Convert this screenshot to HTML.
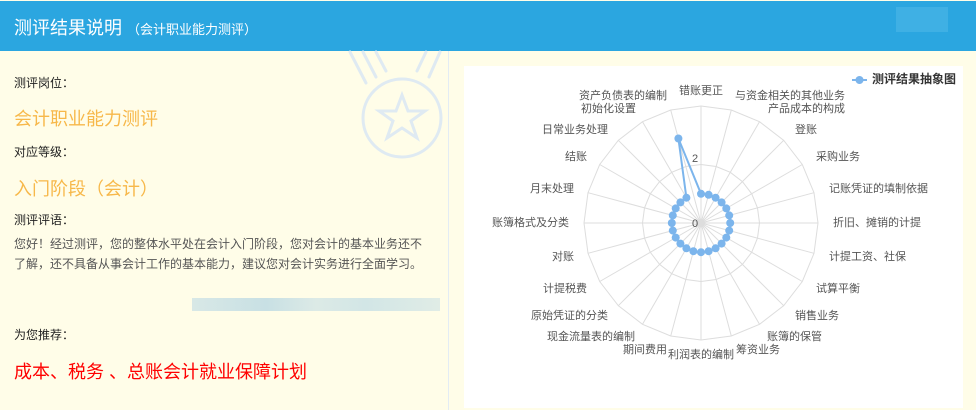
<!DOCTYPE html>
<html><head><meta charset="utf-8"><style>
body{margin:0;width:976px;height:410px;overflow:hidden;background:#fffde8;font-family:"Liberation Sans","Noto Sans CJK SC",sans-serif;position:relative}
.hd{position:absolute;left:0;top:1px;width:976px;height:50px;background:#2ba6e0;color:#fff}
.t{position:absolute;left:14px;top:13px;font-size:18px}
.t small{font-size:13px}
.a{position:absolute;left:14px;font-size:12px;color:#222}
.o{position:absolute;left:14px;font-size:18px;color:#f7b84a}
</style></head><body>
<div class="hd"><div class="t">测评结果说明 <small>（会计职业能力测评）</small></div>
<div style="position:absolute;left:896px;top:6px;width:52px;height:25px;background:#3fb0e4"></div></div>
<svg style="position:absolute;left:0;top:0" width="976" height="410">
<g stroke="#dfeaf2" stroke-width="3" fill="none" stroke-linecap="round">
<line x1="350" y1="52" x2="366" y2="83"/><line x1="363" y1="52" x2="376" y2="77"/><line x1="376" y1="52" x2="386" y2="71"/>
<line x1="426" y1="52" x2="417" y2="71"/><line x1="440" y1="52" x2="429" y2="77"/>
<circle cx="402" cy="118" r="39"/>
<polygon points="402,95 408,111 425,111 411,121 417,138 402,128 387,138 393,121 379,111 396,111"/>
</g>
<line x1="448.5" y1="51" x2="448.5" y2="410" stroke="#e3ecf4"/>
</svg>
<div class="a" style="top:74px">测评岗位：</div>
<div class="o" style="top:105px">会计职业能力测评</div>
<div class="a" style="top:143px">对应等级：</div>
<div class="o" style="top:175px">入门阶段（会计）</div>
<div class="a" style="top:211px">测评评语：</div>
<div class="a" style="top:234px;color:#555;line-height:20px;width:412px">您好！经过测评，您的整体水平处在会计入门阶段，您对会计的基本业务还不了解，还不具备从事会计工作的基本能力，建议您对会计实务进行全面学习。</div>
<div style="position:absolute;left:192px;top:298px;width:248px;height:13px;background:linear-gradient(90deg,#d8e8e6,#c8e0e4 30%,#dceae6 50%,#d2e6e6 70%,#e0ece6)"></div>
<div class="a" style="top:326px">为您推荐：</div>
<div style="position:absolute;left:14px;top:358px;font-size:18px;color:#f00">成本、税务 、总账会计就业保障计划</div>
<svg style="position:absolute;left:464px;top:66px;background:#fff" width="499" height="342" viewBox="464 66 499 342" font-size="11" fill="#555" font-family="Liberation Sans,Noto Sans CJK SC,sans-serif">
<g fill="none" stroke="#ddd" stroke-width="1">
<polygon points="701,106 731.3,110 759.5,121.7 783.7,140.3 802.3,164.5 814,192.7 818,223 814,253.3 802.3,281.5 783.7,305.7 759.5,324.3 731.3,336 701,340 670.7,336 642.5,324.3 618.3,305.7 599.7,281.5 588,253.3 584,223 588,192.7 599.7,164.5 618.3,140.3 642.5,121.7 670.7,110"/>
<polygon points="701,164.5 716.1,166.5 730.3,172.3 742.4,181.6 751.7,193.8 757.5,207.9 759.5,223 757.5,238.1 751.7,252.3 742.4,264.4 730.3,273.7 716.1,279.5 701,281.5 685.9,279.5 671.7,273.7 659.6,264.4 650.3,252.3 644.5,238.1 642.5,223 644.5,207.9 650.3,193.8 659.6,181.6 671.7,172.3 685.9,166.5"/>
<path d="M701 223L701 106M701 223L731.3 110M701 223L759.5 121.7M701 223L783.7 140.3M701 223L802.3 164.5M701 223L814 192.7M701 223L818 223M701 223L814 253.3M701 223L802.3 281.5M701 223L783.7 305.7M701 223L759.5 324.3M701 223L731.3 336M701 223L701 340M701 223L670.7 336M701 223L642.5 324.3M701 223L618.3 305.7M701 223L599.7 281.5M701 223L588 253.3M701 223L584 223M701 223L588 192.7M701 223L599.7 164.5M701 223L618.3 140.3M701 223L642.5 121.7M701 223L670.7 110"/>
</g>
<polygon fill="none" stroke="#7cb5ec" stroke-width="2" points="701,193.8 708.6,194.8 715.6,197.7 721.6,202.4 726.3,208.4 729.2,215.4 730.2,223 729.2,230.6 726.3,237.6 721.6,243.6 715.6,248.3 708.6,251.2 701,252.2 693.4,251.2 686.4,248.3 680.4,243.6 675.7,237.6 672.8,230.6 671.8,223 672.8,215.4 675.7,208.4 680.4,202.4 686.4,197.7 678.4,138.5"/>
<g fill="#7cb5ec">
<circle cx="701" cy="193.8" r="4"/><circle cx="708.6" cy="194.8" r="4"/><circle cx="715.6" cy="197.7" r="4"/><circle cx="721.6" cy="202.4" r="4"/><circle cx="726.3" cy="208.4" r="4"/><circle cx="729.2" cy="215.4" r="4"/><circle cx="730.2" cy="223" r="4"/><circle cx="729.2" cy="230.6" r="4"/><circle cx="726.3" cy="237.6" r="4"/><circle cx="721.6" cy="243.6" r="4"/><circle cx="715.6" cy="248.3" r="4"/><circle cx="708.6" cy="251.2" r="4"/><circle cx="701" cy="252.2" r="4"/><circle cx="693.4" cy="251.2" r="4"/><circle cx="686.4" cy="248.3" r="4"/><circle cx="680.4" cy="243.6" r="4"/><circle cx="675.7" cy="237.6" r="4"/><circle cx="672.8" cy="230.6" r="4"/><circle cx="671.8" cy="223" r="4"/><circle cx="672.8" cy="215.4" r="4"/><circle cx="675.7" cy="208.4" r="4"/><circle cx="680.4" cy="202.4" r="4"/><circle cx="686.4" cy="197.7" r="4"/><circle cx="678.4" cy="138.5" r="4"/>
</g>
<g dominant-baseline="middle">
<text x="695" y="159" text-anchor="middle">2</text><text x="695" y="224" text-anchor="middle">0</text>
<text x="701" y="91" text-anchor="middle">错账更正</text>
<text x="845" y="96" text-anchor="end">与资金相关的其他业务</text>
<text x="845" y="109" text-anchor="end">产品成本的构成</text>
<text x="795" y="130">登账</text>
<text x="816" y="157">采购业务</text>
<text x="829" y="189">记账凭证的填制依据</text>
<text x="833" y="223">折旧、摊销的计提</text>
<text x="829" y="257">计提工资、社保</text>
<text x="816" y="289">试算平衡</text>
<text x="795" y="316">销售业务</text>
<text x="767" y="337">账簿的保管</text>
<text x="736" y="350">筹资业务</text>
<text x="701" y="355" text-anchor="middle">利润表的编制</text>
<text x="667" y="350" text-anchor="end">期间费用</text>
<text x="635" y="337" text-anchor="end">现金流量表的编制</text>
<text x="608" y="316" text-anchor="end">原始凭证的分类</text>
<text x="587" y="289" text-anchor="end">计提税费</text>
<text x="574" y="257" text-anchor="end">对账</text>
<text x="569" y="223" text-anchor="end">账簿格式及分类</text>
<text x="574" y="189" text-anchor="end">月末处理</text>
<text x="587" y="157" text-anchor="end">结账</text>
<text x="608" y="130" text-anchor="end">日常业务处理</text>
<text x="667" y="96" text-anchor="end">资产负债表的编制</text>
<text x="581" y="109">初始化设置</text>
<line x1="852" y1="80" x2="867" y2="80" stroke="#7cb5ec" stroke-width="2"/><circle cx="859.5" cy="80" r="4" fill="#7cb5ec"/>
<text x="872" y="80" font-size="12" font-weight="bold" fill="#333">测评结果抽象图</text>
</g>
</svg>
</body></html>
